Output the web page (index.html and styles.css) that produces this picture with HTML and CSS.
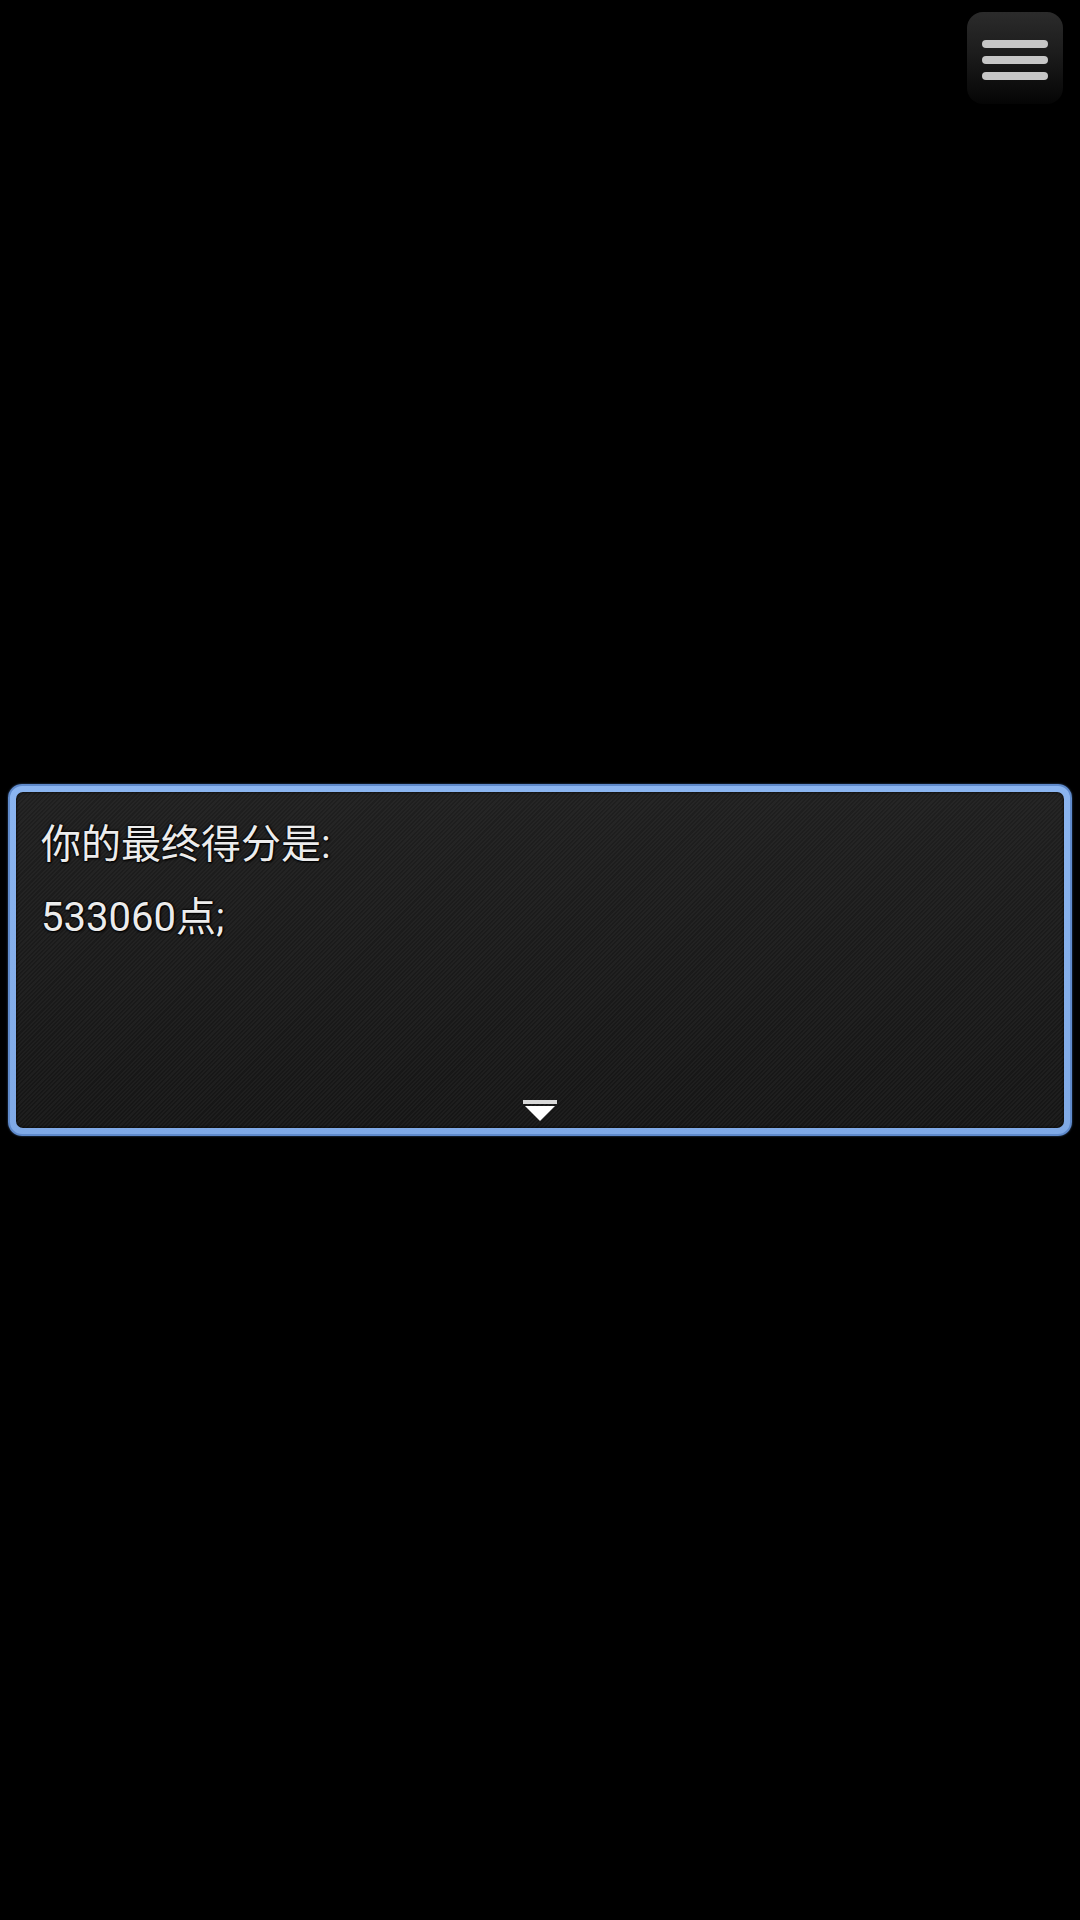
FILE: index.html
```html
<!DOCTYPE html>
<html lang="zh-CN">
<head>
<meta charset="utf-8">
<title>Message</title>
<link rel="stylesheet" href="styles.css">
</head>
<body>
<div class="screen">
  <button class="menu-btn" aria-label="menu">
    <span class="menu-line"></span>
    <span class="menu-line"></span>
    <span class="menu-line"></span>
  </button>
  <div class="window">
    <div class="window-inner">
      <p class="msg-line">你的最终得分是:</p>
      <p class="msg-line">533060点;</p>
      <div class="pause-sign">
        <span class="pause-bar"></span>
        <svg class="pause-tri" width="30" height="15" viewBox="0 0 30 15"><polygon points="0,0 30,0 15,15" fill="#ffffff"/></svg>
      </div>
    </div>
  </div>
</div>
</body>
</html>
```
FILE: styles.css
```css
html, body {
  margin: 0;
  padding: 0;
  background: #000;
}
.screen {
  position: relative;
  width: 1080px;
  height: 1920px;
  display: flex;
  flex-direction: column;
  justify-content: center;
  padding: 0 8px;
  box-sizing: border-box;
  background: #000;
}
.menu-btn {
  position: absolute;
  top: 12px;
  left: 967px;
  width: 96px;
  height: 92px;
  border: 0;
  border-radius: 16px;
  background: linear-gradient(to bottom, #2b2b2b 0%, #1c1c1c 45%, #050505 100%);
  display: flex;
  flex-direction: column;
  align-items: center;
  justify-content: flex-start;
  gap: 8px;
  padding: 28px 0 0 0;
  box-sizing: border-box;
}
.menu-line {
  display: block;
  width: 66px;
  height: 8px;
  border-radius: 4px;
  background: #c6c6c6;
}
.window {
  height: 352px;
  box-sizing: border-box;
  border: 2px solid #5f8acb;
  border-radius: 14px;
  padding: 6px;
  background: linear-gradient(to bottom, #8bb5f0, #7fa9e6);
  box-shadow: 0 0 2px #3c5c8c;
}
.window-inner {
  position: relative;
  height: 100%;
  box-sizing: border-box;
  border-radius: 7px;
  padding: 16px 22px 0 25px;
  background:
    linear-gradient(to bottom, rgba(40,40,40,0.3), rgba(0,0,0,0.2)),
    repeating-linear-gradient(135deg, #252525 0px, #252525 1.5px, #1b1b1b 1.5px, #1b1b1b 3px);
  box-shadow: inset 0 0 3px #000;
}
.msg-line {
  margin: 0;
  font-family: "Roboto", "Noto Sans CJK SC", sans-serif;
  font-size: 40px;
  line-height: 73px;
  color: #ececec;
  text-shadow: 0 0 2px #000, 0 0 3px #000, 1px 1px 2px #000;
}
.pause-sign {
  position: absolute;
  left: 50%;
  bottom: 7px;
  transform: translateX(-50%);
  display: flex;
  flex-direction: column;
  align-items: center;
  gap: 2px;
}
.pause-bar {
  display: block;
  width: 34px;
  height: 4px;
  background: #d8d8d8;
}
.pause-tri {
  display: block;
}
```
